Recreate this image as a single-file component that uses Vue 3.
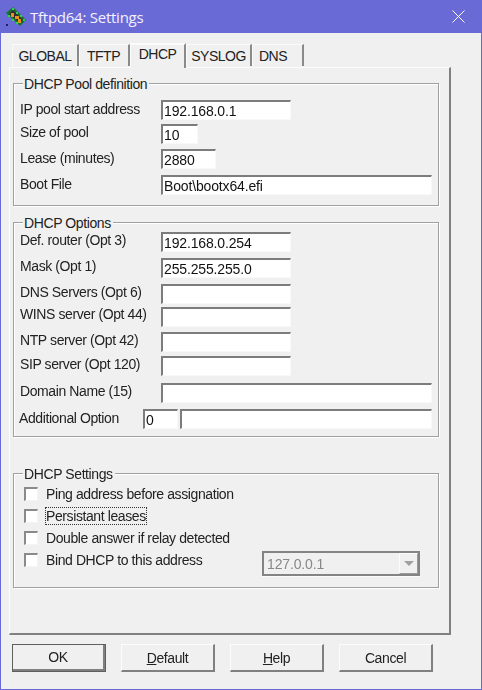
<script setup>
const tabs = [
  { name: 'GLOBAL', w: 67, pad: 0 },
  { name: 'TFTP', w: 51, pad: 1 },
  { name: 'DHCP', w: 56, active: true, pad: 0 },
  { name: 'SYSLOG', w: 66, pad: 0 },
  { name: 'DNS', w: 52, pad: 9 }
]
const pool = [
  { label: 'IP pool start address', value: '192.168.0.1', w: 130, gap: 0, shift: -1 },
  { label: 'Size of pool', value: '10', w: 37, gap: 4, shift: -2 },
  { label: 'Lease (minutes)', value: '2880', w: 55, gap: 5, shift: -1 },
  { label: 'Boot File', value: 'Boot\\bootx64.efi', w: 271, gap: 6, shift: -1 }
]
const options = [
  { label: 'Def. router (Opt 3)', value: '192.168.0.254', w: 130, gap: 0, shift: -2 },
  { label: 'Mask (Opt 1)', value: '255.255.255.0', w: 130, gap: 6, shift: -2 },
  { label: 'DNS Servers (Opt 6)', value: '', w: 130, gap: 6, shift: -2 },
  { label: 'WINS server (Opt 44)', value: '', w: 130, gap: 3, shift: -3 },
  { label: 'NTP server (Opt 42)', value: '', w: 130, gap: 5, shift: -2 },
  { label: 'SIP server (Opt 120)', value: '', w: 130, gap: 4, shift: -2 },
  { label: 'Domain Name (15)', value: '', w: 271, gap: 7, shift: -2 }
]
const checks = [
  { label: 'Ping address before assignation' },
  { label: 'Persistant leases', focus: true },
  { label: 'Double answer if relay detected' },
  { label: 'Bind DHCP to this address' }
]
const buttons = [
  { pre: '', key: '', post: 'OK', primary: true },
  { pre: '', key: 'D', post: 'efault' },
  { pre: '', key: 'H', post: 'elp' },
  { pre: 'Cancel', key: '', post: '' }
]
</script>

<template>
  <div class="window">
    <header class="titlebar">
      <svg class="appicon" width="22" height="22" viewBox="0 0 22 22">
        <path d="M1 7 L8 1 L21 14 L15 20 Z" fill="#17742a" />
        <path d="M4 8 L8 4 L18 14 L15 17 Z" fill="#332b33" />
        <path d="M6 7h3v4H6zM10 10h4v3h-4zM13 13h3v4h-3z" fill="#e8921e" />
        <path d="M7 2h2v2H7zM11 6h2v2h-2zM15 9h2v2h-2zM18 13h2v2h-2zM3 9h2v2H3zM7 13h2v2H7zM11 16h2v2h-2z" fill="#30d44c" />
        <rect x="1" y="18" width="2" height="2" fill="#20205a" />
      </svg>
      <span class="title">Tftpd64: Settings</span>
      <svg class="close" width="13" height="13" viewBox="0 0 13 13">
        <path d="M0.5 0.5 L12.5 12.5 M12.5 0.5 L0.5 12.5" stroke="#ffffff" stroke-width="1" fill="none" />
      </svg>
    </header>

    <main class="client">
      <nav class="tabs">
        <div
          v-for="t in tabs"
          :key="t.name"
          class="tab"
          :class="{ active: t.active }"
          :style="{ width: t.w + 'px', paddingRight: t.pad + 'px' }"
        >{{ t.name }}</div>
      </nav>

      <section class="panel">
        <div class="group group-pool">
          <span class="legend">DHCP Pool definition</span>
          <div
            v-for="r in pool"
            :key="r.label"
            class="row"
            :style="{ marginTop: r.gap + 'px' }"
          >
            <label class="lbl" :style="{ marginTop: r.shift + 'px' }">{{ r.label }}</label>
            <div class="edit" :style="{ width: r.w + 'px' }">{{ r.value }}</div>
          </div>
        </div>

        <div class="group group-opts">
          <span class="legend">DHCP Options</span>
          <div
            v-for="r in options"
            :key="r.label"
            class="row"
            :style="{ marginTop: r.gap + 'px' }"
          >
            <label class="lbl" :style="{ marginTop: r.shift + 'px' }">{{ r.label }}</label>
            <div class="edit" :style="{ width: r.w + 'px' }">{{ r.value }}</div>
          </div>
          <div class="row row-add">
            <label class="lbl lbl-add">Additional Option</label>
            <div class="edit edit-code">0</div>
            <div class="edit edit-rest"></div>
          </div>
        </div>

        <div class="group group-set">
          <span class="legend">DHCP Settings</span>
          <div class="checks">
            <div v-for="c in checks" :key="c.label" class="check">
              <span class="box"></span>
              <span class="clabel" :class="{ focus: c.focus }">{{ c.label }}</span>
            </div>
          </div>
          <div class="combo">
            <span class="combo-text">127.0.0.1</span>
            <span class="combo-btn"><i class="arrow"></i></span>
          </div>
        </div>
      </section>

      <footer class="actions">
        <div v-for="b in buttons" :key="b.post + b.pre" class="btn" :class="{ primary: b.primary }">
          <span>{{ b.pre }}<u v-if="b.key">{{ b.key }}</u>{{ b.post }}</span>
        </div>
      </footer>
    </main>
  </div>
</template>

<style>
html, body { margin: 0; padding: 0; background: #f0f0f0; }
</style>

<style scoped>
.window {
  box-sizing: border-box;
  width: 482px;
  height: 690px;
  border: 1px solid #6a6ad6;
  border-top: 0;
  background: #f0f0f0;
  display: flex;
  flex-direction: column;
  font-family: "Liberation Sans", Arial, sans-serif;
  font-size: 14px;
  letter-spacing: -0.4px;
  color: #222222;
  overflow: hidden;
}
.titlebar {
  height: 33px;
  flex: none;
  background: #6a6ad6;
  display: flex;
  align-items: center;
  padding: 0 16px 0 4px;
  box-sizing: border-box;
}
.appicon { flex: none; margin-right: 3px; }
.title {
  color: #f4f0ff;
  font-family: "Open Sans", "Noto Sans", sans-serif;
  font-size: 15px;
  letter-spacing: -0.25px;
  flex: 1;
}
.close { flex: none; }
.client {
  flex: 1;
  display: flex;
  flex-direction: column;
  padding: 9px 0 0 8px;
  filter: blur(0.3px);
}
.tabs {
  display: flex;
  height: 25px;
  padding-left: 3px;
  align-items: flex-end;
  position: relative;
  z-index: 1;
}
.tab {
  box-sizing: border-box;
  height: 22px;
  margin-bottom: 1px;
  background: #f0f0f0;
  border-top: 1px solid #fafafa;
  border-left: 1px solid #fafafa;
  border-right: 2px solid #8a8a8a;
  text-align: center;
  line-height: 22px;
  letter-spacing: -0.5px;
}
.tab.active {
  height: 25px;
  margin-bottom: -1px;
  line-height: 18px;
  border-top: 2px solid #fcfcfc;
  padding-bottom: 2px;
}
.panel {
  box-sizing: border-box;
  width: 442px;
  height: 568px;
  border-top: 1px solid #fcfcfc;
  border-left: 1px solid #fcfcfc;
  border-right: 2px solid #808080;
  border-bottom: 2px solid #808080;
  padding: 15px 0 0 3px;
}
.group {
  position: relative;
  box-sizing: border-box;
  width: 426px;
  border: 1px solid #a0a0a0;
  box-shadow: 1px 1px 0 #ffffff, inset 1px 1px 0 #ffffff;
  padding: 16px 6px 0 6px;
}
.group-pool { height: 123px; }
.group-opts { height: 215px; margin-top: 16px; padding-top: 9px; }
.group-set { height: 115px; margin-top: 36px; padding: 0; }
.legend {
  position: absolute;
  left: 9px;
  top: -9px;
  background: #f0f0f0;
  padding: 0 2px 0 1px;
  line-height: 18px;
}
.row {
  display: flex;
  height: 20px;
  align-items: flex-start;
}
.lbl {
  width: 141px;
  flex: none;
  line-height: 20px;
  white-space: nowrap;
}
.edit {
  box-sizing: border-box;
  height: 20px;
  flex: none;
  background: #ffffff;
  border-top: 2px solid #7c7c7c;
  border-left: 2px solid #7c7c7c;
  border-right: 1px solid #f8f8f8;
  border-bottom: 1px solid #f8f8f8;
  line-height: 18px;
  padding-left: 1px;
  letter-spacing: -0.15px;
  color: #111;
  white-space: nowrap;
  overflow: hidden;
}
.row-add { margin-top: 6px; }
.lbl-add { width: 123px; margin: -1px 0 0 -1px; }
.edit-code { width: 35px; margin-left: 1px; }
.edit-rest { width: 252px; margin-left: 2px; }
.checks {
  position: absolute;
  left: 10px;
  top: 13px;
  display: flex;
  flex-direction: column;
  gap: 8px;
}
.check {
  display: flex;
  align-items: center;
  height: 14px;
}
.box {
  box-sizing: border-box;
  width: 14px;
  height: 14px;
  flex: none;
  background: #ffffff;
  border-top: 2px solid #8a8a8a;
  border-left: 2px solid #8a8a8a;
  border-right: 1px solid #f4f4f4;
  border-bottom: 1px solid #f4f4f4;
  margin-right: 8px;
}
.clabel { line-height: 16px; white-space: nowrap; border: 1px dotted transparent; margin-left: -1px; }
.clabel.focus { border-color: #333; }
.combo {
  position: absolute;
  left: 248px;
  top: 77px;
  box-sizing: border-box;
  width: 158px;
  height: 25px;
  border: 2px solid #848484;
  box-shadow: 0 1px 0 #fcfcfc;
  display: flex;
  align-items: center;
  justify-content: space-between;
  background: #f0f0f0;
}
.combo-text { color: #888; padding-left: 3px; letter-spacing: -0.15px; }
.combo-btn {
  box-sizing: border-box;
  width: 19px;
  height: 21px;
  border-top: 1px solid #fcfcfc;
  border-left: 1px solid #fcfcfc;
  border-right: 1px solid #9a9a9a;
  border-bottom: 1px solid #9a9a9a;
  display: flex;
  align-items: center;
  justify-content: center;
}
.arrow {
  width: 0;
  height: 0;
  border-left: 5px solid transparent;
  border-right: 5px solid transparent;
  border-top: 5px solid #a0a0a0;
}
.actions {
  display: flex;
  gap: 15px;
  margin-top: 9px;
  padding-left: 3px;
}
.btn {
  box-sizing: border-box;
  width: 94px;
  height: 28px;
  border-top: 1px solid #fcfcfc;
  border-left: 1px solid #fcfcfc;
  border-right: 2px solid #808080;
  border-bottom: 2px solid #808080;
  display: flex;
  align-items: center;
  justify-content: center;
}
.btn.primary {
  outline: 1px solid #606060;
  outline-offset: -1px;
  border-right-width: 3px;
  border-bottom-width: 3px;
}
</style>
